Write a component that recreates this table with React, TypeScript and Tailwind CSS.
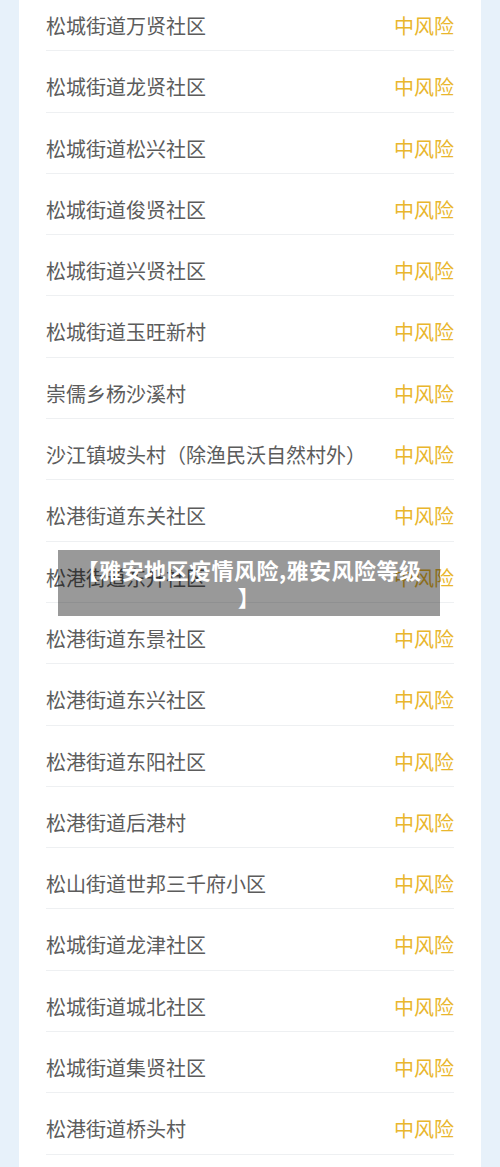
const areas = [
  '松城街道万贤社区',
  '松城街道龙贤社区',
  '松城街道松兴社区',
  '松城街道俊贤社区',
  '松城街道兴贤社区',
  '松城街道玉旺新村',
  '崇儒乡杨沙溪村',
  '沙江镇坡头村（除渔民沃自然村外）',
  '松港街道东关社区',
  '松港街道东升社区',
  '松港街道东景社区',
  '松港街道东兴社区',
  '松港街道东阳社区',
  '松港街道后港村',
  '松山街道世邦三千府小区',
  '松城街道龙津社区',
  '松城街道城北社区',
  '松城街道集贤社区',
  '松港街道桥头村',
]

function RiskRow({ name }: { name: string }) {
  return (
    <div className="flex justify-between items-center pt-[26px] pb-[14.3px] border-b border-[#eef0f2]">
      <div className="text-[20px] leading-[20px] text-[#5c5c5c]">{name}</div>
      <div className="text-[20px] leading-[20px] text-[#e9b62d]">中风险</div>
    </div>
  )
}

export default function App() {
  return (
    <div
      className="relative w-[500px] h-[1167px] overflow-hidden bg-[#e7f1fa] px-[19px] mx-auto"
      style={{ fontFamily: '"Noto Sans CJK SC", "Noto Sans", sans-serif' }}
    >
      <div className="bg-white h-full px-[27px] overflow-hidden">
        <div className="-mt-[10px]">
          {areas.map((a) => (
            <RiskRow key={a} name={a} />
          ))}
        </div>
      </div>

      {/* title overlay */}
      <div className="absolute top-[550px] left-[58px] w-[382px] bg-black/40 px-[16px] py-[6px] text-center text-white font-bold text-[22px] leading-[27px] tracking-[0.5px]">
        【雅安地区疫情风险,雅安风险等级
        <br />】
      </div>
    </div>
  )
}
